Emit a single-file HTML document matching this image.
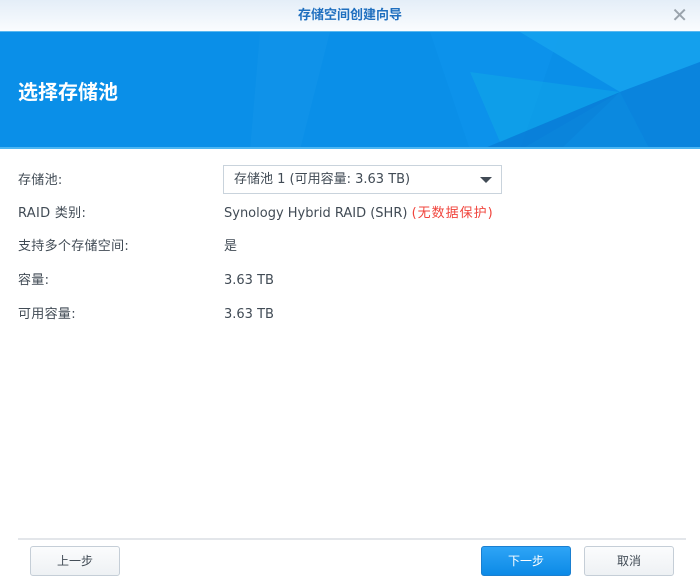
<!DOCTYPE html>
<html><head><meta charset="utf-8"><style>
*{margin:0;padding:0;box-sizing:border-box}
body{width:700px;height:575px;overflow:hidden;background:#fff;font-family:"DejaVu Sans","Noto Sans CJK SC",sans-serif;position:relative;color:#414b55;font-size:13px;line-height:16px}
.tb{position:absolute;left:0;top:0;width:700px;height:31px;background:linear-gradient(#e4eef8,#fafcfe);text-align:center;line-height:28px;color:#1f6fbf;font-size:13px;font-weight:bold;font-family:"Noto Sans CJK SC",sans-serif}
.x{position:absolute;right:12px;top:4px;color:#9aa3ac;font-size:20px;font-weight:normal;line-height:20px}
.bn{position:absolute;left:0;top:31px;width:700px;height:118px;background:#0a8fe8;overflow:hidden;border-top:1px solid #5ab8f0;border-bottom:2px solid #4cb6f2}
.bn h1{position:absolute;left:18px;top:46px;color:#fff;font-size:20px;font-weight:bold;line-height:26px;font-family:"Noto Sans CJK SC",sans-serif}
.l{position:absolute;left:18px;letter-spacing:.3px}
.v{position:absolute;left:224px}
.r{color:#f0443c;letter-spacing:1px}
.dd{position:absolute;left:223px;top:165px;width:279px;height:29px;border:1px solid #c9d3dc;padding-left:10px;line-height:27px}
.dd:after{content:"";position:absolute;right:9px;top:11px;border-left:6px solid transparent;border-right:6px solid transparent;border-top:6px solid #414b55}
.line{position:absolute;left:18px;top:538px;width:668px;height:2px;background:#e3e6ea}
.b{position:absolute;top:546px;height:30px;width:90px;border:1px solid #c5ced7;border-radius:3px;background:linear-gradient(#fbfcfd,#eef1f4);text-align:center;line-height:28px;font-size:12px;color:#414b55}
.p{background:linear-gradient(#2ea4f6,#0c8ae6);border-color:#1a7fd0;color:#fff}
</style></head><body>
<div class="tb">存储空间创建向导<span class="x">✕</span></div>
<div class="bn">
<svg width="700" height="118" style="position:absolute;left:0;top:0">
<polygon points="260,0 330,0 300,118 250,118" fill="#1496ea" opacity=".5"/>
<polygon points="430,0 560,0 520,118 470,118" fill="#0e94ec" opacity=".6"/>
<polygon points="520,0 700,0 700,30 620,60" fill="#18a6f0" opacity=".7"/>
<polygon points="620,60 700,30 700,118 650,118" fill="#0a7fd8" opacity=".7"/>
<polygon points="480,118 620,60 560,118" fill="#0876d0" opacity=".6"/>
<polygon points="520,118 620,60 650,118" fill="#0c86dc" opacity=".7"/>
<polygon points="470,40 620,60 500,110" fill="#10aae8" opacity=".5"/>
</svg>
<h1>选择存储池</h1></div>
<div class="l" style="top:173px">存储池:</div>
<div class="dd">存储池 1 (可用容量: 3.63 TB)</div>
<div class="l" style="top:206px">RAID 类别:</div>
<div class="v" style="top:206px">Synology Hybrid RAID (SHR) <span class="r">(无数据保护)</span></div>
<div class="l" style="top:239px">支持多个存储空间:</div>
<div class="v" style="top:239px">是</div>
<div class="l" style="top:273px">容量:</div>
<div class="v" style="top:273px">3.63 TB</div>
<div class="l" style="top:307px">可用容量:</div>
<div class="v" style="top:307px">3.63 TB</div>
<div class="line"></div>
<div class="b" style="left:30px">上一步</div>
<div class="b p" style="left:481px">下一步</div>
<div class="b" style="left:584px">取消</div>
</body></html>
